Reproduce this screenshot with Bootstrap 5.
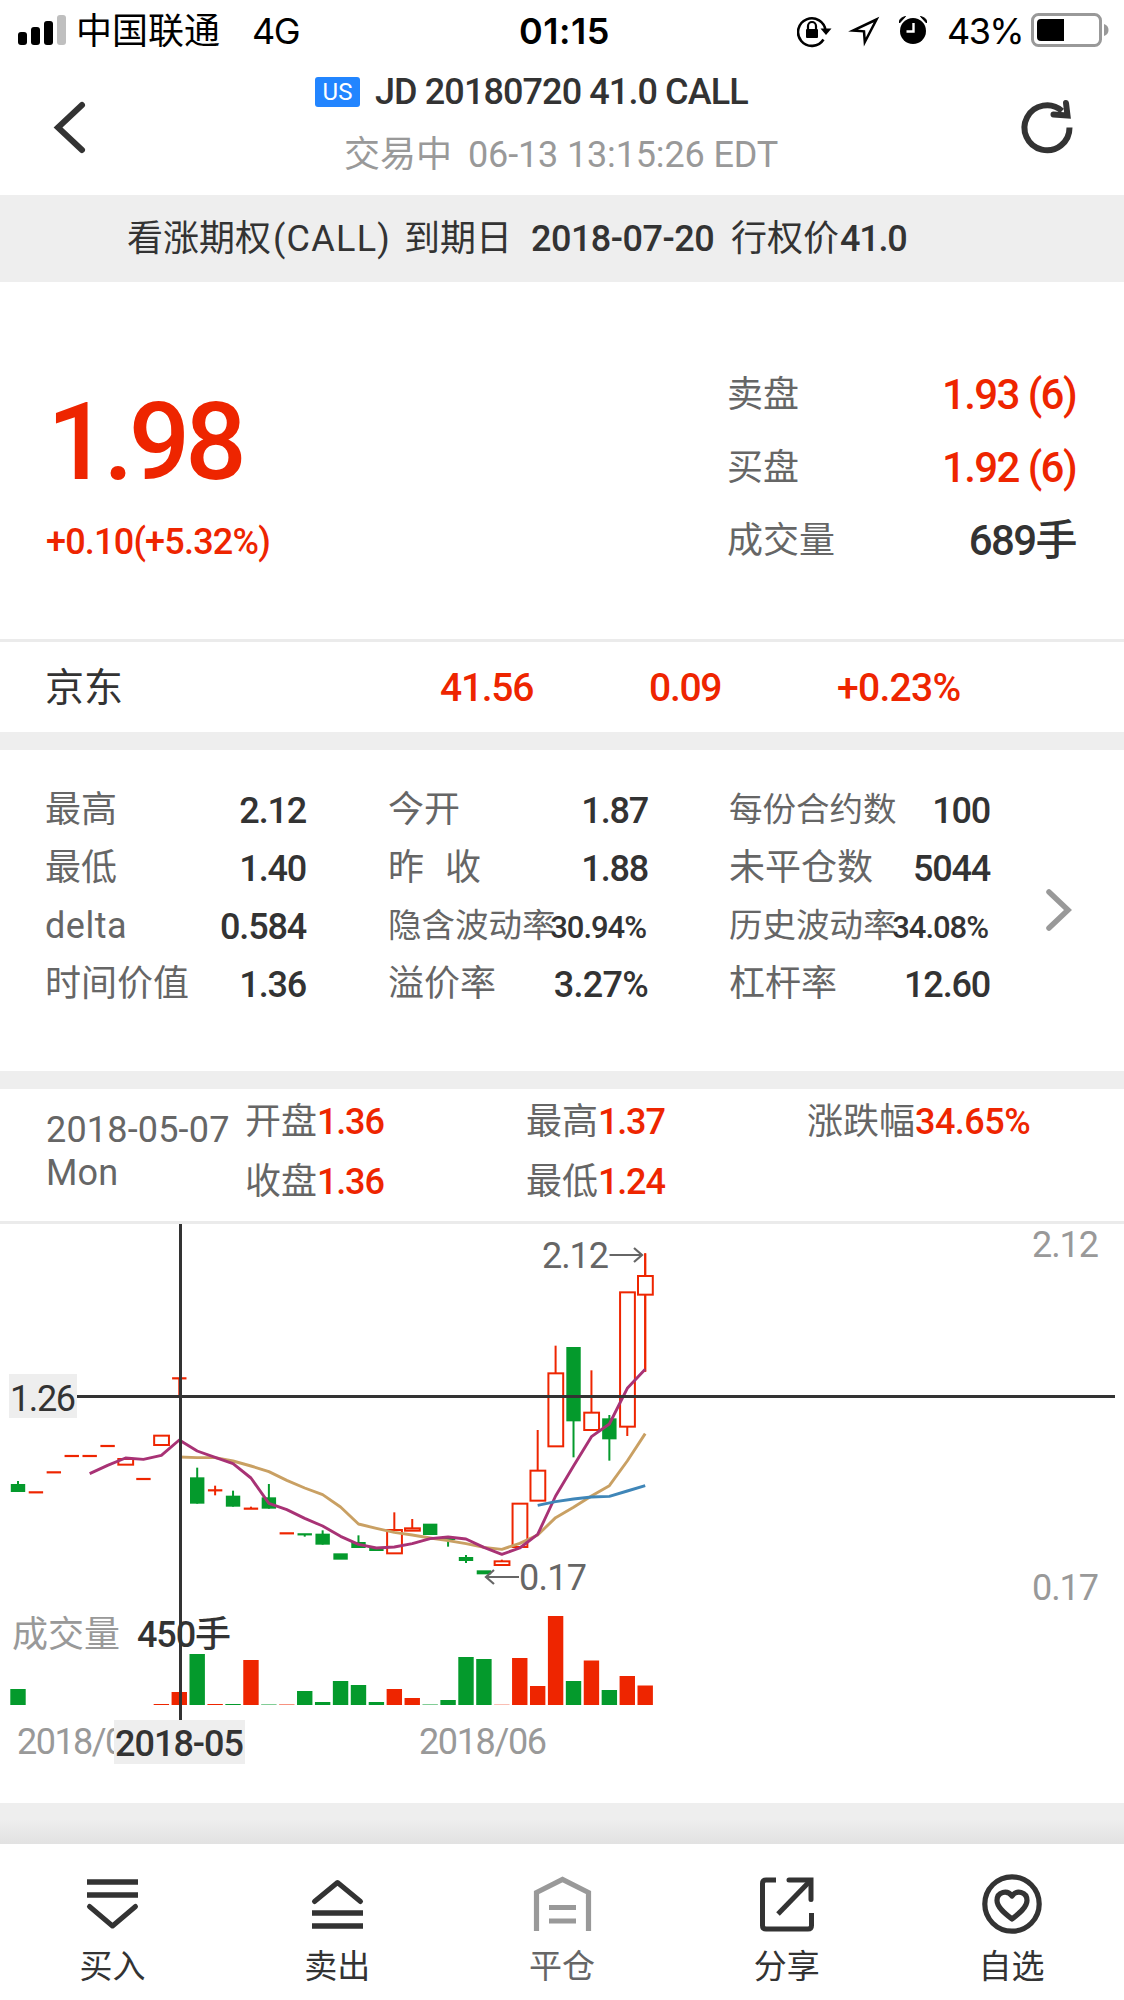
<!DOCTYPE html>
<html lang="zh-CN">
<head>
<meta charset="utf-8">
<meta name="viewport" content="width=device-width, initial-scale=1">
<title>JD 20180720 41.0 CALL</title>
<link href="https://cdn.jsdelivr.net/npm/bootstrap@5.3.0/dist/css/bootstrap.min.css" rel="stylesheet">
<style>
  body { width: 1124px; height: 2000px; overflow: hidden; background: #fff; color: #333;
         font-family: Roboto, "Noto Sans CJK SC", sans-serif; font-size: 36px; line-height: 44px; white-space: nowrap; }
  svg { display: block; flex: none; }
  .num { font-weight: 500; letter-spacing: -.033em; }
  .ink { color: #333; }
  .soft { color: #666; }
  .pale { color: #999; }
  .rise { color: #ee2500; }
  .slot { flex: none; }
  .statusbar { height: 60px; color: #000; font-family: Inter, "Noto Sans CJK SC", sans-serif; }
  .statusbar div { padding-top: 2px; }
  .topbar { height: 135px; }
  .market { width: 45px; height: 30px; background: #2285ff; border-radius: 3px; color: #fff; font-size: 24px; line-height: 30px; }
  .strip { height: 87px; background: #eee; padding: 1px 0 0 127px; }
  .quote { height: 360px; border-bottom: 3px solid #ebebeb; padding: 0 48px 0 46px; }
  .price { font-size: 108px; line-height: 110px; }
  .book { width: 349px; }
  .book .line { height: 73px; }
  .book .num { font-size: 42px; letter-spacing: -.038em; }
  .stock { height: 90px; padding: 2px 0 0 45px; font-size: 39px; }
  .gap-band { height: 18px; background: #eee; }
  .details { height: 321px; padding: 31px 0 0 45px; }
  .details .cell { height: 58px; }
  .details .num { padding-top: 1px; }
  .details .tight { font-size: 33.5px; }
  .details .small-num { font-size: 31px; padding-top: 3px; margin: 0 2px 0 -6px; }
  .daily { height: 135px; border-bottom: 3px solid #ebebeb; padding-left: 46px; }
  .daily .day { line-height: 43px; letter-spacing: .005em; padding-top: 20px; }
  .daily .ohlc { padding-top: 3px; }
  .daily .ohlc > div { height: 60px; line-height: 60px; }
  .chart text { font-size: 36px; }
  .foot-band { height: 41px; background: linear-gradient(#eee 0, #eee 40%, #e2e2e2 100%); }
  .tabs { height: 156px; }
  .tabs .tab { padding-top: 28px; font-size: 33px; }
  .tabs .caption { line-height: 40px; padding-top: 11px; }
</style>
</head>
<body>

<header>
  <div class="statusbar d-flex align-items-center">
    <svg class="slot" style="margin-left:18px" width="58" height="60" viewBox="0 0 58 60">
      <rect x="0" y="32" width="9" height="13" rx="3"/><rect x="13" y="27" width="9" height="18" rx="3"/>
      <rect x="26" y="21" width="9" height="24" rx="3"/><rect x="39" y="15" width="9" height="30" rx="3" fill="#bfbfbf"/>
    </svg>
    <div class="slot" style="width:176px">中国联通</div>
    <div class="slot" style="width:267px;letter-spacing:-1.500px">4G</div>
    <div class="slot fw-semibold" style="width:278px;letter-spacing:.5px">01:15</div>
    <svg class="slot" width="150" height="60" viewBox="0 0 150 60">
      <path d="M26.500 39.500A13.800 13.800 0 1 1 28.600 31" fill="none" stroke="#000" stroke-width="2.600"/>
      <path d="M23.500 28.500h11l-5.500 6.500z"/>
      <rect x="9" y="29" width="12" height="9" rx="1"/>
      <path d="M11 29v-3a4 4 0 0 1 8 0v3" fill="none" stroke="#000" stroke-width="2.200"/>
      <path d="M79.500 19.500L56 30.500l11 .8.800 10.700z" fill="none" stroke="#000" stroke-width="2.500"/>
      <circle cx="116" cy="31" r="13"/>
      <path d="M102.500 23q-1-5 6-6.500zM129.500 23q1-5-6-6.500z" stroke="#000" stroke-width="1"/>
      <path d="M116.500 23v8.500h-7" fill="none" stroke="#fff" stroke-width="2.400"/>
    </svg>
    <div class="slot" style="width:84px;letter-spacing:-1.600px">43%</div>
    <svg class="slot" width="80" height="60" viewBox="0 0 80 60">
      <rect x="1.500" y="14.500" width="68" height="31" rx="6" fill="none" stroke="#999" stroke-width="3"/>
      <path d="M10 19h23v22H10q-4 0-4-4V23q0-4 4-4z"/>
      <path d="M73 24q4.500 1.500 4.500 6t-4.500 6z" fill="#999"/>
    </svg>
  </div>

  <div class="topbar d-flex">
    <svg class="slot" style="margin-left:50px" width="40" height="135" viewBox="0 0 40 135">
      <path d="M32 45L8 67.500 32 90" fill="none" stroke="#333" stroke-width="6" stroke-linecap="round"/>
    </svg>
    <div class="flex-grow-1">
      <div class="d-flex align-items-center" style="padding:9px 0 0 225px">
        <div class="market text-center">US</div>
        <div class="num" style="margin-left:15px;padding-top:1px;letter-spacing:-.025em">JD 20180720 41.0 CALL</div>
      </div>
      <div class="d-flex pale" style="padding:19px 0 0 254px">
        <div class="slot" style="width:124px">交易中</div>
        <div style="letter-spacing:-.004em">06-13 13:15:26 EDT</div>
      </div>
    </div>
    <svg class="slot" style="margin-right:46px" width="60" height="135" viewBox="0 0 60 135">
      <path d="M51.500 67.500A22.500 22.500 0 1 1 44 51" fill="none" stroke="#333" stroke-width="6"/>
      <path d="M48 43l1.500 12.500-14-1" fill="none" stroke="#333" stroke-width="6" stroke-linecap="round"/>
    </svg>
  </div>
</header>

<div class="strip d-flex align-items-center">
  <div class="slot" style="width:146px">看涨期权</div>
  <div class="slot" style="width:131px;letter-spacing:.035em">(CALL)</div>
  <div class="slot" style="width:127px">到期日</div>
  <div class="slot num" style="width:200px;letter-spacing:-.014em">2018-07-20</div>
  <div class="slot" style="width:109px">行权价</div>
  <div class="slot num">41.0</div>
</div>

<section class="quote d-flex justify-content-between rise">
  <div style="padding-top:105px">
    <div class="price num" style="padding-left:1px;letter-spacing:-.045em">1.98</div>
    <div class="num" style="padding-top:23px;letter-spacing:-.022em">+0.10(+5.32%)</div>
  </div>
  <div class="book" style="padding-top:76px">
    <div class="line d-flex align-items-center justify-content-between"><span class="soft">卖盘</span><span class="num">1.93 (6)</span></div>
    <div class="line d-flex align-items-center justify-content-between"><span class="soft">买盘</span><span class="num">1.92 (6)</span></div>
    <div class="line d-flex align-items-center justify-content-between"><span class="soft">成交量</span><span class="num ink">689手</span></div>
  </div>
</section>

<section class="stock d-flex align-items-center">
  <div class="slot" style="width:395px">京东</div>
  <div class="slot num rise" style="width:209px">41.56</div>
  <div class="slot num rise" style="width:188px">0.09</div>
  <div class="slot num rise" style="letter-spacing:-.018em">+0.23%</div>
</section>
<div class="gap-band"></div>

<section class="details d-flex">
  <div style="width:261px">
    <div class="cell d-flex align-items-center justify-content-between"><span class="soft">最高</span><span class="num">2.12</span></div>
    <div class="cell d-flex align-items-center justify-content-between"><span class="soft">最低</span><span class="num">1.40</span></div>
    <div class="cell d-flex align-items-center justify-content-between"><span class="soft" style="letter-spacing:.015em">delta</span><span class="num">0.584</span></div>
    <div class="cell d-flex align-items-center justify-content-between"><span class="soft">时间价值</span><span class="num">1.36</span></div>
  </div>
  <div style="width:260px;margin-left:82px">
    <div class="cell d-flex align-items-center justify-content-between"><span class="soft">今开</span><span class="num">1.87</span></div>
    <div class="cell d-flex align-items-center justify-content-between"><span class="soft">昨<span style="margin-left:21px">收</span></span><span class="num">1.88</span></div>
    <div class="cell d-flex align-items-center justify-content-between"><span class="soft tight">隐含波动率</span><span class="num small-num">30.94%</span></div>
    <div class="cell d-flex align-items-center justify-content-between"><span class="soft">溢价率</span><span class="num" style="letter-spacing:-.02em">3.27%</span></div>
  </div>
  <div style="width:261px;margin-left:81px">
    <div class="cell d-flex align-items-center justify-content-between"><span class="soft tight">每份合约数</span><span class="num">100</span></div>
    <div class="cell d-flex align-items-center justify-content-between"><span class="soft">未平仓数</span><span class="num">5044</span></div>
    <div class="cell d-flex align-items-center justify-content-between"><span class="soft tight">历史波动率</span><span class="num small-num">34.08%</span></div>
    <div class="cell d-flex align-items-center justify-content-between"><span class="soft">杠杆率</span><span class="num">12.60</span></div>
  </div>
  <svg style="margin:102px 0 0 52px" width="34" height="54" viewBox="0 0 34 54">
    <path d="M7 9l19 18L7 45" fill="none" stroke="#999" stroke-width="5.500" stroke-linecap="round"/>
  </svg>
</section>
<div class="gap-band"></div>

<section class="daily d-flex soft">
  <div class="day slot" style="width:199px">2018-05-07<br>Mon</div>
  <div class="ohlc slot" style="width:281px">
    <div>开盘<span class="num rise">1.36</span></div>
    <div>收盘<span class="num rise">1.36</span></div>
  </div>
  <div class="ohlc slot" style="width:281px">
    <div>最高<span class="num rise">1.37</span></div>
    <div>最低<span class="num rise">1.24</span></div>
  </div>
  <div class="ohlc slot"><div>涨跌幅<span class="num rise" style="letter-spacing:-.015em">34.65%</span></div></div>
</section>

<svg class="chart" width="1124" height="579" viewBox="0 1224 1124 579">
  <g id="volume"></g>
  <g id="candles"></g>
  <g id="averages" fill="none" stroke-width="2.900" stroke-linejoin="round"></g>
  <g fill="#999">
    <text x="1032" y="1257" textLength="67">2.12</text>
    <text x="1032" y="1600" textLength="67">0.17</text>
    <text x="12" y="1647">成交量</text>
    <text x="17" y="1754" textLength="127">2018/05</text>
    <text x="419" y="1754" textLength="128">2018/06</text>
  </g>
  <g fill="#666">
    <text x="542" y="1268" textLength="67">2.12</text>
    <text x="519" y="1590" textLength="68">0.17</text>
  </g>
  <g fill="none" stroke="#666" stroke-width="2.200">
    <path d="M609.500 1255H642M634 1248l8 7-8 7"/>
    <path d="M519 1577H486M494 1570l-8 7 8 7"/>
  </g>
  <text x="137" y="1647" font-weight="500" fill="#333" textLength="94">450手</text>
  <path d="M180.500 1224V1720M77 1396.500H1115" stroke="#333" stroke-width="3"/>
  <rect x="9" y="1374" width="68" height="44" fill="#eee"/>
  <text x="10" y="1411" fill="#333" textLength="66">1.26</text>
  <rect x="114" y="1720" width="131" height="44" fill="#eee"/>
  <text x="115" y="1756" fill="#333" font-weight="500" textLength="129">2018-05</text>
</svg>

<div class="foot-band"></div>
<nav class="tabs row g-0 text-center">
  <div class="tab col">
    <svg class="mx-auto" width="64" height="64" viewBox="0 0 64 64" fill="none" stroke="#333" stroke-width="5.500">
      <path d="M7 10h51M7 23h51"/><path d="M9.500 34.500L32.500 54 55.500 34.500" stroke-width="5" stroke-linecap="round" stroke-linejoin="round"/>
    </svg>
    <div class="caption">买入</div>
  </div>
  <div class="tab col">
    <svg class="mx-auto" width="64" height="64" viewBox="0 0 64 64" fill="none" stroke="#333" stroke-width="5.500">
      <path d="M7 41h51M7 54h51"/><path d="M9.500 29.500L32.500 10.500 55.500 29.500" stroke-width="5" stroke-linecap="round" stroke-linejoin="round"/>
    </svg>
    <div class="caption">卖出</div>
  </div>
  <div class="tab col soft">
    <svg class="mx-auto" width="64" height="64" viewBox="0 0 64 64" fill="none" stroke="#999" stroke-width="5.200">
      <path d="M6.500 59V20.500L32.500 7.500 58.500 20.500V59M19 35.500h27M19 49h27"/>
    </svg>
    <div class="caption">平仓</div>
  </div>
  <div class="tab col">
    <svg class="mx-auto" width="64" height="64" viewBox="0 0 64 64" fill="none" stroke="#333" stroke-width="5">
      <path d="M21 8H11q-3.500 0-3.500 3.500V53.500q0 3.500 3.500 3.500H53q3.500 0 3.500-3.500V41"/>
      <path d="M34 8H56V27.500" stroke-linecap="round"/><path d="M56 8L23 42"/>
    </svg>
    <div class="caption">分享</div>
  </div>
  <div class="tab col">
    <svg class="mx-auto" width="64" height="64" viewBox="0 0 64 64" fill="none" stroke="#333" stroke-width="5.200">
      <circle cx="32" cy="32" r="27.200"/>
      <path d="M32 47C25.500 42 17 35.500 17 28.500 17 19.500 27.500 17.500 32 24 36.500 17.500 47 19.500 47 28.500 47 35.500 38.500 42 32 47z" stroke-linejoin="round"/>
    </svg>
    <div class="caption">自选</div>
  </div>
</nav>

<script src="https://cdn.jsdelivr.net/npm/bootstrap@5.3.0/dist/js/bootstrap.bundle.min.js"></script>
<script>
  const RED = '#ee2500', GREEN = '#049a2c';
  // kind (g filled, r hollow, l/k red/green dash), body top, body bottom, wick top, wick bottom; thirds of a pixel below y = 1220
  const candles = [
    ['g',792,816,783,816],['l',817],['l',757],['l',708],['l',708],['l',678],['r',717,734],['l',777],['r',647,675],
    ['l',475,0,475,530],['g',772,851,743,851],['l',811,0,797,826],['g',827,860,812,860],['l',866,0,860,866],
    ['g',832,866,792,866],['l',940],['k',943,0,943,950],['g',941,974,931,974],['g',1000,1019],['g',966,984,946,984],
    ['g',984,993],['r',930,1000,877,930],['r',925,932,897,925],['g',911,945],['k',957,0,950,980],
    ['g',1011,1023,1005,1029],['g',1051,1063],['r',1024,1035,1019,1024],['r',851,981],['r',752,842,630,752],
    ['r',460,679,377,460],['g',381,604,381,712],['r',578,630,451,578],['g',595,658,585,722],
    ['r',217,620,620,648],['r',168,224,100,455]
  ];
  const volumes = { 0:['g',16], 8:['r',1], 9:['r',13], 10:['g',51], 11:['r',1], 12:['g',1], 13:['r',45], 14:['g',.5], 15:['r',.5],
    16:['g',14], 17:['g',3], 18:['g',24], 19:['g',20], 20:['g',3], 21:['r',16], 22:['r',7], 23:['g',.5], 24:['g',5], 25:['g',48],
    26:['g',46], 27:['r',.3], 28:['r',47], 29:['r',19], 30:['r',89], 31:['g',24], 32:['r',44.500], 33:['g',15], 34:['r',29], 35:['r',19.500] };
  const averages = [
    ['#c9a063', 9, [711,713,713,723,738,755,781,804,824,861,912,925,937,945,954,962,971,982,988,970,945,893,862,828,797,723,641]],
    ['#a83275', 4, [761,736,714,718,706,660,693,712,731,774,850,869,895,918,949,973,984,981,971,956,951,957,982,1003,984,943,828,738,650,612,505,448]],
    ['#3f86b8', 29, [856,845,837,831,829,813,797]]
  ];
  const px = i => 18 + 17.92 * i, py = v => 1220 + v / 3;
  document.getElementById('candles').innerHTML = candles.map(([k, a, b, t, u], i) => {
    const x = px(i), c = k === 'g' || k === 'k' ? GREEN : RED;
    const stem = (p, q) => q > p ? `<path d="M${x} ${py(p)}V${py(q)}" stroke="${c}" stroke-width="2"/>` : '';
    if (k === 'g') return stem(t, u) + `<rect x="${x - 7.2}" y="${py(a)}" width="14.400" height="${(b - a) / 3}" fill="${c}"/>`;
    if (k === 'r') return stem(t, Math.min(u, a)) + stem(Math.max(t, b), u) + (t < a && u > b ? stem(t, a) + stem(b, u) : '') +
      `<rect x="${x - 7.2}" y="${py(a)}" width="14.800" height="${(b - a) / 3}" fill="none" stroke="${c}" stroke-width="2"/>`;
    return stem(t, u) + `<path d="M${x - 7.2} ${py(a)}h14.400" stroke="${c}" stroke-width="2.200"/>`;
  }).join('');
  document.getElementById('volume').innerHTML = Object.entries(volumes).map(([i, [k, h]]) =>
    `<rect x="${px(i) - 7.7}" y="${1705 - h}" width="15.400" height="${h}" fill="${k === 'g' ? GREEN : RED}"/>`).join('');
  document.getElementById('averages').innerHTML = averages.map(([c, s, v]) =>
    `<polyline stroke="${c}" points="${v.map((y, j) => px(s + j) + ',' + py(y)).join(' ')}"/>`).join('');
</script>
</body>
</html>
